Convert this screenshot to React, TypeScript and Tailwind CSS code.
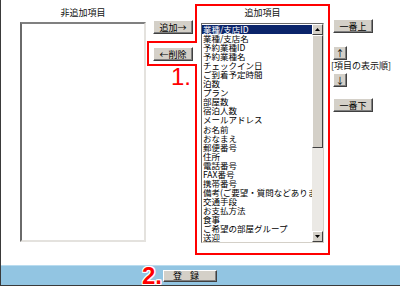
const ITEMS = [
  "業種/支店ID",
  "業種/支店名",
  "予約業種ID",
  "予約業種名",
  "チェックイン日",
  "ご到着予定時間",
  "泊数",
  "プラン",
  "部屋数",
  "宿泊人数",
  "メールアドレス",
  "お名前",
  "おなまえ",
  "郵便番号",
  "住所",
  "電話番号",
  "FAX番号",
  "携帯番号",
  "備考(ご要望・質問などありまし",
  "交通手段",
  "お支払方法",
  "食事",
  "ご希望の部屋グループ",
  "送迎",
];

function Btn({ children, className = "" }: { children: React.ReactNode; className?: string }) {
  return (
    <button
      className={`flex items-center justify-center border border-t-white border-l-white border-r-[#404040] border-b-[#404040] bg-[#d4d0c8] text-[9px] leading-none text-black shadow-[inset_-1px_-1px_0_#808080] ${className}`}
    >
      {children}
    </button>
  );
}

function Arrow({ up }: { up?: boolean }) {
  return (
    <div className="flex h-[11px] w-[11px] items-center justify-center border border-t-white border-l-white border-r-[#404040] border-b-[#404040] bg-[#d4d0c8]">
      <svg width="5" height="3" viewBox="0 0 5 3">
        <path d={up ? "M2.5 0 L5 3 L0 3 Z" : "M0 0 L5 0 L2.5 3 Z"} fill="#000" />
      </svg>
    </div>
  );
}

export default function App() {
  return (
    <div className="relative h-[286px] w-[400px] overflow-hidden border-b border-l border-[#3a3a3a] bg-white font-['Noto_Sans_CJK_JP',sans-serif] text-[#111]">
      {/* main area */}
      <div className="flex h-[265px] pl-[19px]">
        {/* not added */}
        <div className="flex w-[126px] flex-col">
          <div className="h-[22px] pt-[7px] text-center text-[9px] leading-[11px]">非追加項目</div>
          <div className="h-[220px] border-2 border-t-[#808080] border-l-[#6a6a6a] border-r-[#e4e2de] border-b-[#e4e2de] bg-white" />
        </div>

        {/* add / remove */}
        <div className="ml-[7px] flex w-[40px] flex-col gap-[13px] pt-[20px]">
          <Btn className="h-[14px] w-[40px]">追加→</Btn>
          <Btn className="h-[14px] w-[40px]">←削除</Btn>
        </div>

        {/* added */}
        <div className="ml-[8px] flex w-[123px] flex-col">
          <div className="h-[23px] pt-[7px] text-center text-[9px] leading-[11px]">追加項目</div>
          <div className="flex h-[220px] border border-t-[#6a6a6a] border-l-[#6a6a6a] border-r-[#d4d0c8] border-b-[#d4d0c8] bg-white">
            <div className="flex-1 overflow-hidden pt-[1px]">
              {ITEMS.map((it, i) => (
                <div
                  key={it}
                  className={`h-[9.05px] whitespace-nowrap pl-[1px] text-[8.5px] leading-[9.05px] ${
                    i === 0 ? "bg-[#0a246a] text-white" : "text-black"
                  }`}
                >
                  {it}
                </div>
              ))}
            </div>
            <div className="flex w-[11px] flex-col bg-[#ebe9e5]">
              <Arrow up />
              <div className="h-[113px] border border-t-white border-l-white border-r-[#404040] border-b-[#404040] bg-[#d4d0c8]" />
              <div className="flex-1" />
              <Arrow />
            </div>
          </div>
        </div>

        {/* order */}
        <div className="ml-[7px] flex flex-col pt-[19px]">
          <Btn className="ml-[2px] h-[14px] w-[40px]">一番上</Btn>
          <Btn className="ml-[2px] mt-[13px] h-[14px] w-[14px]">↑</Btn>
          <div className="h-[13px] whitespace-nowrap text-[9px] leading-[12px]">[項目の表示順]</div>
          <Btn className="ml-[2px] h-[14px] w-[14px]">↓</Btn>
          <Btn className="ml-[2px] mt-[11px] h-[14px] w-[40px]">一番下</Btn>
        </div>
      </div>

      {/* footer bar */}
      <div className="flex h-[20px] items-center border-t border-[#b9dcef] bg-[#92c5e2] pl-[141px]">
        <span className="font-['Liberation_Sans',sans-serif] text-[24px] font-bold leading-none text-[#f00] [text-shadow:1px_0_#fff,-1px_0_#fff,0_1px_#fff,0_-1px_#fff,1px_1px_#fff,-1px_-1px_#fff,1px_-1px_#fff,-1px_1px_#fff]">
          2.
        </span>
        <Btn className="ml-[1px] h-[12px] w-[54px] tracking-[8px]">登録</Btn>
      </div>

      {/* annotation */}
      <svg className="pointer-events-none absolute left-0 top-0" width="400" height="286">
        <polygon
          points="147,42 195,42 195,5 328,5 328,254 195,254 195,65 147,65"
          fill="none"
          stroke="#f00"
          strokeWidth="2"
        />
      </svg>
      <span className="absolute left-[170px] top-[65px] font-['Liberation_Sans',sans-serif] text-[24px] leading-none text-[#f00]">
        1.
      </span>
    </div>
  );
}
